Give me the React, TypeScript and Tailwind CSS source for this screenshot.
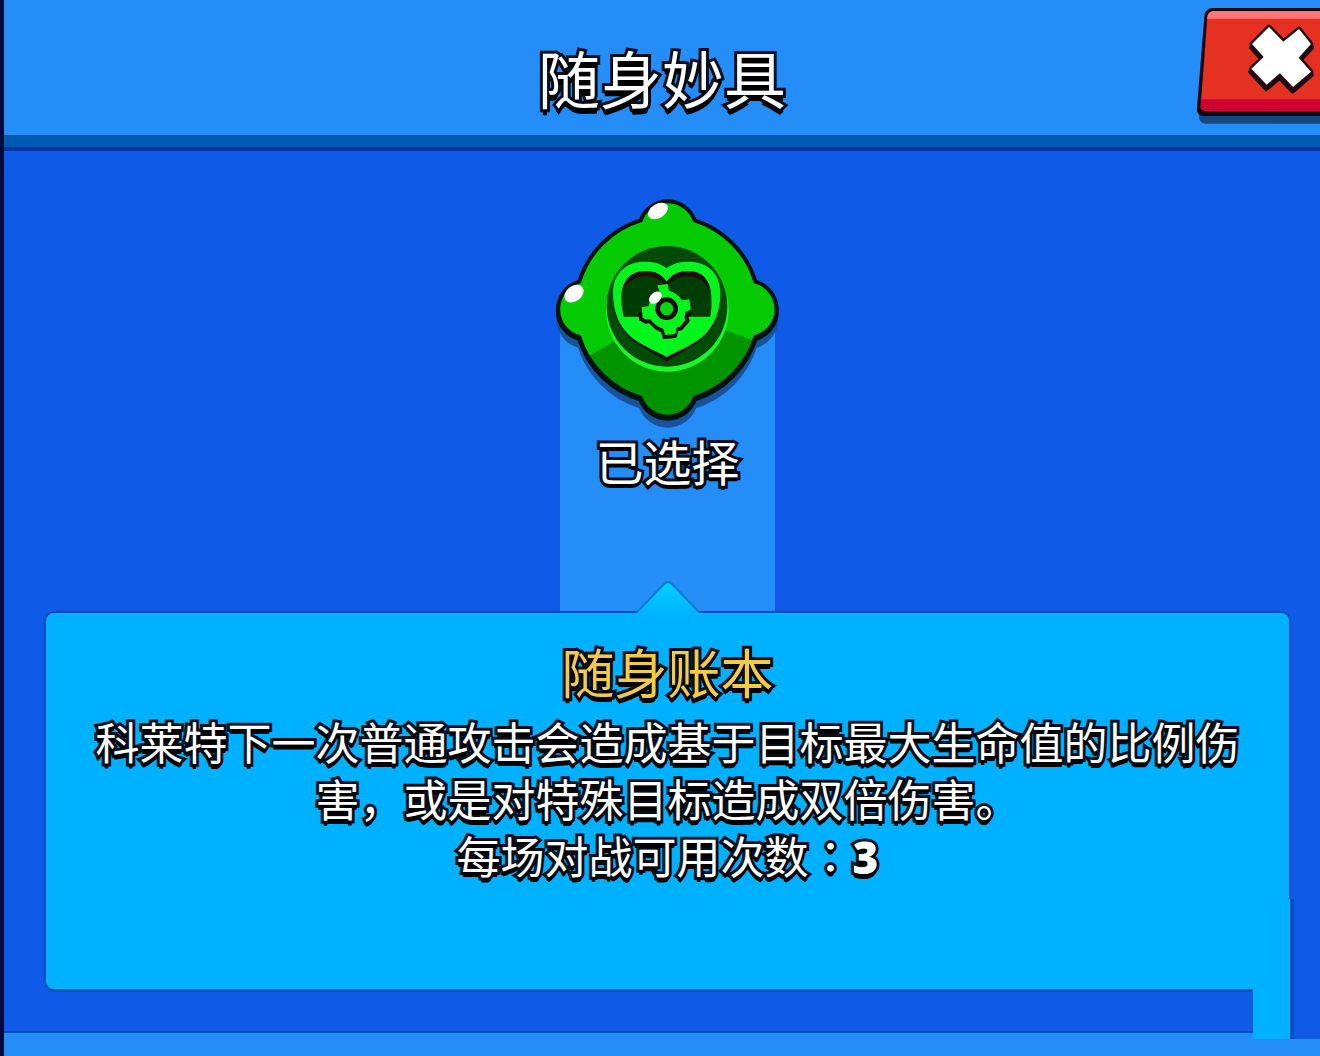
const outline =
  "[paint-order:stroke_fill] [-webkit-text-stroke:6px_#06101c]";

const gemPath =
  "M303 106 A86 86 0 0 1 465 106 A278 278 0 0 1 647 290 A86 86 0 0 1 647 456 A278 278 0 0 1 465 638 A86 86 0 0 1 303 638 A278 278 0 0 1 119 456 A86 86 0 0 1 119 290 A278 278 0 0 1 303 106 Z";

function Gem() {
  return (
    <svg
      viewBox="10 3 750 750"
      className="block size-[250px] shrink-0"
      aria-hidden="true"
    >
      <defs>
        <clipPath id="gem-body">
          <path d={gemPath} />
        </clipPath>
      </defs>

      {/* Drop shadow and rim */}
      <path d={gemPath} transform="translate(0 27)" fill="#164a8c" stroke="#164a8c" strokeWidth="12" opacity="0.85" />
      <path d={gemPath} transform="translate(0 5)" fill="#03120c" stroke="#03120c" strokeWidth="14" />

      {/* Body */}
      <path d={gemPath} fill="#05cb05" />
      <path d="M383 372 L100 542 V740 H700 V488 Z" fill="#009500" clipPath="url(#gem-body)" />
      <path d={gemPath} fill="none" stroke="#03120c" strokeWidth="12" />
      <ellipse cx="355" cy="78" rx="33" ry="21" transform="rotate(-32 355 78)" fill="#fff" />
      <ellipse cx="103" cy="326" rx="32" ry="23" transform="rotate(-36 103 326)" fill="#fff" />

      {/* Socket */}
      <circle cx="383" cy="376" r="184" fill="#18f72a" />
      <circle cx="382" cy="364" r="181" fill="#004b05" />

      {/* Heart */}
      <path
        d="M220 330 C218 400 250 446 286 472 C326 498 350 511 381 530 C412 511 436 498 476 472 C512 446 544 400 542 330 Z"
        fill="#1f0d0c"
      />
      <path
        d="M381 250 C362 234 340 230 315 230 C262 230 220 262 220 325 C220 378 236 420 270 452 C304 482 345 495 381 516 C417 495 458 482 492 452 C526 420 542 378 542 325 C542 262 500 230 447 230 C422 230 400 234 381 250 Z"
        fill="#03f51c"
      />
      <path
        d="M252 395 C246 374 244 352 245 333 C248 286 274 258 316 258 C346 258 368 270 381 290 C394 270 416 258 446 258 C488 258 512 286 515 333 C516 352 516 374 512 395 Z"
        fill="#003d05"
      />
      <path
        d="M246 325 C250 284 276 258 316 258 C346 258 368 270 381 290 C394 270 416 258 446 258 C486 258 510 284 514 325 C500 290 474 274 444 274 C416 274 394 286 381 308 C368 286 346 274 318 274 C288 274 260 290 246 325 Z"
        fill="#1f0d0c"
      />

      {/* Gear */}
      <path
        d="M302 382 L304 402 L318 410 L330 408 L350 428 L370 438 L374 456 L406 453 L410 434 L424 430 L444 407 L440 396 L452 380"
        fill="none"
        stroke="#1f0d0c"
        strokeWidth="12"
        strokeLinejoin="round"
      />
      <path
        d="M353 301 L384 297 L388 317 Q411 322 427 346 L449 343 L453 374 L438 380 Q435 407 412 423 L408 446 L376 449 L370 427 Q346 424 331 401 L309 398 L306 366 L327 364 Q331 337 360 320 Z"
        fill="#03f51c"
      />
      <circle cx="381" cy="371" r="27" fill="#05d713" stroke="#1f0d0c" strokeWidth="14" />
      <ellipse cx="347" cy="338" rx="22" ry="15" transform="rotate(-42 347 338)" fill="#fff" />
    </svg>
  );
}

function CloseButton() {
  return (
    <button type="button" aria-label="关闭" className="block cursor-pointer justify-self-end">
      <svg viewBox="0 0 420 390" className="block h-[130px] w-[140px]" aria-hidden="true">
        <path d="M57 335 V350 Q59 371 78 371 H420 V335 Z" fill="#15497f" />
        <path d="M73 48 Q76 24 100 24 H440 V348 H72 Q49 348 51 325 Z" fill="#120812" />
        <path d="M82 52 Q84 33 102 33 H440 V332 H75 Q61 332 62 318 Z" fill="#e53122" />
        <path d="M81 56 Q83 33 102 33 H440 V56 Z" fill="#ff7776" />
        <path d="M63 298 H440 V332 H75 Q61 332 62 318 Z" fill="#ce0032" />
        <path
          d="M267 79 L311 122 L357 86 L395 132 L358 171 L394 213 L339 261 L300 220 L260 254 L214 204 L250 169 L216 131 Z"
          transform="translate(-1 11)"
          fill="#210b10"
          stroke="#210b10"
          strokeWidth="16"
          strokeLinejoin="round"
        />
        <path
          d="M267 81 L310 125 L357 87 L393 132 L356 173 L393 215 L339 261 L300 220 L260 254 L214 206 L251 171 L216 132 Z"
          fill="#fff"
          stroke="#210b10"
          strokeWidth="14"
          strokeLinejoin="round"
          paintOrder="stroke"
        />
      </svg>
    </button>
  );
}

function SelectedItem() {
  return (
    <section className="flex h-[427px] w-[215px] flex-col items-center bg-[linear-gradient(to_bottom,transparent_125px,#248df8_125px)]">
      <Gem />
      <p className={`text-[48px] leading-[48px] text-white [text-shadow:0_2px_#000,0_4px_#000] ${outline}`}>
        已选择
      </p>
    </section>
  );
}

function DetailCard() {
  return (
    <section className="relative h-[376px] w-full rounded-lg bg-[#00b1ff] pt-7 text-center text-white shadow-[0_0_0_2px_#0750bd,0_2px_0_1px_#0750bd]">
      {/* Pointer */}
      <svg viewBox="0 0 66 36" className="absolute -top-8 left-1/2 h-9 w-[66px] -translate-x-1/2" aria-hidden="true">
        <defs>
          <linearGradient id="pointer" x1="0" y1="0" x2="0" y2="1">
            <stop offset="0.2" stopColor="#00caff" />
            <stop offset="1" stopColor="#00b1ff" />
          </linearGradient>
        </defs>
        <path d="M1 32 L29 3 Q33 -1 37 3 L65 32 V36 H1 Z" fill="url(#pointer)" />
        <path d="M1 32 L29 3 Q33 -1 37 3 L65 32" fill="none" stroke="#1478cf" strokeWidth="2" />
      </svg>

      <h2 className={`text-[53px] leading-[60px] text-[#f5ca45] [text-shadow:0_2px_#000,0_4px_#000,0_5px_#000] ${outline}`}>
        随身账本
      </h2>
      <p className={`mt-3 px-12 text-[44px] leading-[57px] [text-shadow:0_2px_#000,0_4px_#000,0_5px_#000] ${outline}`}>
        科莱特下一次普通攻击会造成基于目标最大生命值的比例伤害，或是对特殊目标造成双倍伤害。
        <br />
        每场对战可用次数<span className="font-['Noto_Sans_CJK_JP',sans-serif]" lang="ja">：</span>
        <span className="font-['Open_Sans',sans-serif] font-extrabold">3</span>
      </p>
    </section>
  );
}

export default function App() {
  return (
    <div
      lang="zh-CN"
      className="flex min-h-screen flex-col overflow-hidden border-l-4 border-[#020a3a] bg-[#0f5ae6] font-['Noto_Sans_CJK_SC',sans-serif]"
    >
      <header className="grid h-[151px] grid-cols-[1fr_auto_1fr] items-start border-b-4 border-[#0038a6] bg-[linear-gradient(to_bottom,#248df8_135px,#005ab4_135px)]">
        <h1
          className={`col-start-2 pt-8 text-[62px] leading-[90px] text-white [text-shadow:0_2px_#000,0_4px_#000,0_6px_#000] ${outline}`}
        >
          随身妙具
        </h1>
        <CloseButton />
      </header>

      <main className="relative flex flex-1 flex-col items-center pt-[35px] pr-[31px] pl-[42px]">
        <SelectedItem />
        <DetailCard />
        {/* Strip that hangs below the card's right corner */}
        <div className="absolute right-0 -bottom-2 flex h-[140px] w-[67px] bg-[#0f5ae6]">
          <div className="w-[41px] border-r-4 border-[#0750bd] bg-[#00b1ff]" />
        </div>
      </main>

      <footer className="h-[25px] border-t-2 border-[#0b50c0] bg-[#248df8]" />
    </div>
  );
}
